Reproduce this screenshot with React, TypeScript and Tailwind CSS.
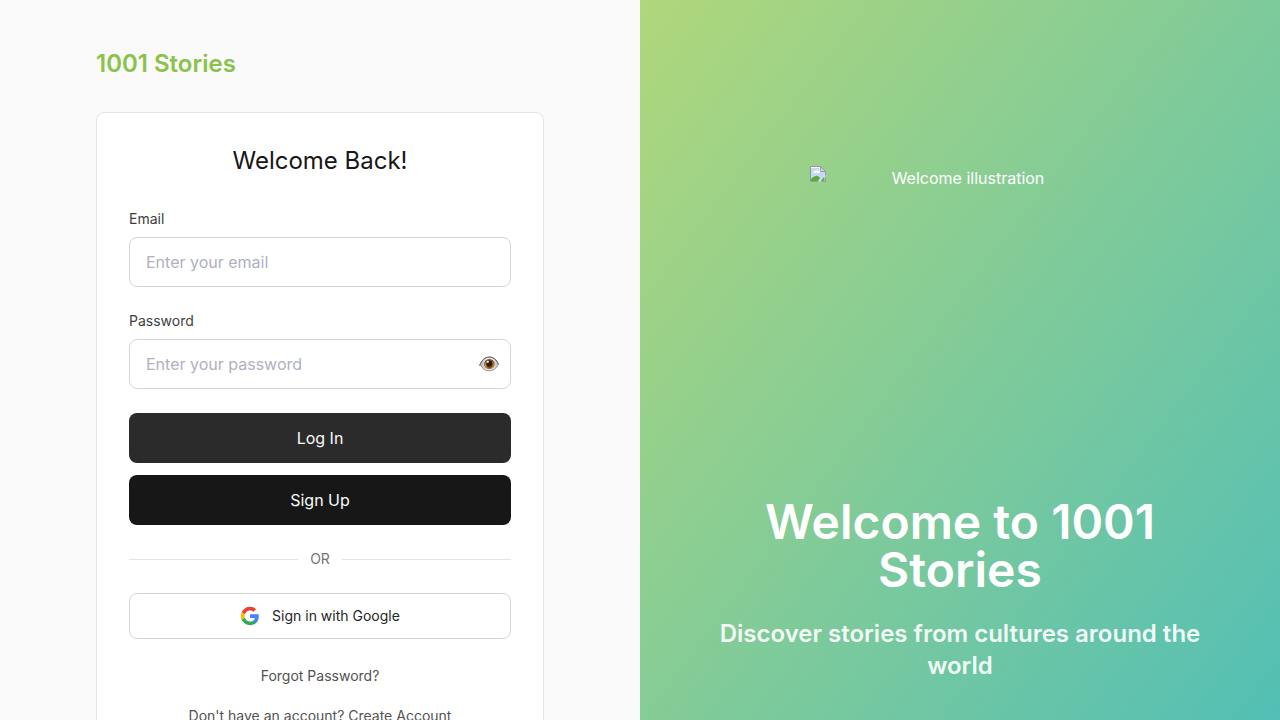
export default function App() {
  return (
    <div className="flex h-[720px] overflow-hidden bg-[#fafafa] font-['Inter',sans-serif] antialiased">
      <div className="w-1/2 px-24 pt-12">
        <h1 className="mb-8 text-2xl leading-8 font-semibold text-[#8bc34a]">1001 Stories</h1>
        <div className="h-[688px] rounded-lg border border-[#e5e5e5] bg-white p-8">
          <h2 className="mb-8 text-center text-2xl leading-8 text-[#171717]">Welcome Back!</h2>
          <label className="mb-2 block text-sm leading-5 text-[#404040]">Email</label>
          <input placeholder="Enter your email" className="mb-6 block h-[50px] w-full rounded-lg border border-[#d4d4d4] px-4 text-base placeholder:text-[#b0b0c0]" />
          <label className="mb-2 block text-sm leading-5 text-[#404040]">Password</label>
          <div className="relative mb-6">
            <input placeholder="Enter your password" className="block h-[50px] w-full rounded-lg border border-[#d4d4d4] px-4 text-base placeholder:text-[#b0b0c0]" />
            <svg viewBox="0 0 20 16" className="absolute top-[17px] right-3 h-4 w-5">
              <defs>
                <radialGradient id="iris" cy="0.6">
                  <stop offset="0.4" stopColor="#6b3f12" />
                  <stop offset="0.75" stopColor="#c98a1c" />
                  <stop offset="1" stopColor="#6b4a1c" />
                </radialGradient>
                <linearGradient id="sclera">
                  <stop offset="0" stopColor="#b5b2b9" />
                  <stop offset="0.5" stopColor="#f4f2f4" />
                  <stop offset="1" stopColor="#c5c1c6" />
                </linearGradient>
              </defs>
              <path d="M.7 9.4C3 3.6 6.2 1.1 10.5 1.1c4.1 0 6.9 2.4 8.9 7.2-2.2 4.4-5.2 6.5-9.1 6.5-4 0-6.7-1.9-8.8-5.7z" fill="url(#sclera)" stroke="#8a838a" strokeWidth="0.9" />
              <circle cx="10.4" cy="8.1" r="5.2" fill="url(#iris)" />
              <circle cx="10.4" cy="7.4" r="3" fill="#2b1a18" />
              <circle cx="8.8" cy="5.8" r="1.1" fill="#fff" />
              <path d="M.6 9.5C3 3.5 6.2 1.1 10.5 1.1c4.1 0 6.9 2.4 8.9 7.2" fill="none" stroke="#6b6166" />
            </svg>
          </div>
          <button className="mb-3 block h-[50px] w-full rounded-lg bg-[#2b2b2b] text-base text-[#fafafa]">Log In</button>
          <button className="mb-6 block h-[50px] w-full rounded-lg bg-[#171717] text-base text-[#fafafa]">Sign Up</button>
          <div className="mb-6 flex items-center gap-3 text-sm leading-5 text-[#737373]">
            <div className="h-px flex-1 bg-[#e5e5e5]" />OR<div className="h-px flex-1 bg-[#e5e5e5]" />
          </div>
          <button className="flex h-[46px] w-full items-center justify-center gap-3 rounded-lg border border-[#d4d4d4] text-sm text-[#262626]">
            <svg width="20" height="20" viewBox="0 0 24 24">
              <path fill="#4285F4" d="M22.56 12.25c0-.78-.07-1.53-.2-2.25H12v4.26h5.92c-.26 1.37-1.04 2.53-2.21 3.31v2.77h3.57c2.08-1.92 3.28-4.74 3.28-8.09z" />
              <path fill="#34A853" d="M12 23c2.97 0 5.46-.98 7.28-2.66l-3.57-2.77c-.98.66-2.23 1.06-3.71 1.06-2.86 0-5.29-1.93-6.16-4.53H2.18v2.84C3.99 20.53 7.7 23 12 23z" />
              <path fill="#FBBC05" d="M5.84 14.09c-.22-.66-.35-1.36-.35-2.09s.13-1.43.35-2.09V7.07H2.18C1.43 8.55 1 10.22 1 12s.43 3.45 1.18 4.93l2.85-2.22.81-.62z" />
              <path fill="#EA4335" d="M12 5.38c1.62 0 3.06.56 4.21 1.64l3.15-3.15C17.45 2.09 14.97 1 12 1 7.7 1 3.99 3.47 2.18 7.07l3.66 2.84c.87-2.6 3.3-4.53 6.16-4.53z" />
            </svg>
            Sign in with Google
          </button>
          <p className="mt-[27px] text-center text-sm leading-5 text-[#525252]">Forgot Password?</p>
          <p className="mt-5 text-center text-sm leading-5 text-[#525252]">Don't have an account? Create Account</p>
        </div>
      </div>
      <div className="flex h-[848px] w-1/2 flex-col items-center justify-center bg-[linear-gradient(to_bottom_right,#b0d77b,#4bbdba)] px-16 text-center text-white">
        <div className="flex h-[300px] w-[300px]">
          <svg width="16" height="16" viewBox="0 0 16 16" className="shrink-0">
            <path fill="#c3d9fb" d="M.5.5h10l5 5v5l-5 5H.5z" />
            <path fill="#fff" d="M1 1h9v4h5v1H9V2H1zM3 7q0-2 2-2 1-2 3 0 2 0 2 2z" />
            <path fill="#56ad36" d="M1 15v-2q6-6 9-1l-2 3zM14 11v3l-1 1h-2z" />
            <path fill="none" stroke="#999" d="M8 15.5H.5V.5h10l5 5V9M10.5.5v5h5M15.5 12v3.5H12" />
          </svg>
          <span className="flex-1 leading-6">Welcome illustration</span>
        </div>
        <h2 className="mt-8 text-5xl leading-[48px] font-semibold">Welcome to 1001 Stories</h2>
        <p className="mt-6 text-2xl leading-8 font-semibold opacity-90">Discover stories from cultures around the world</p>
      </div>
    </div>
  );
}
